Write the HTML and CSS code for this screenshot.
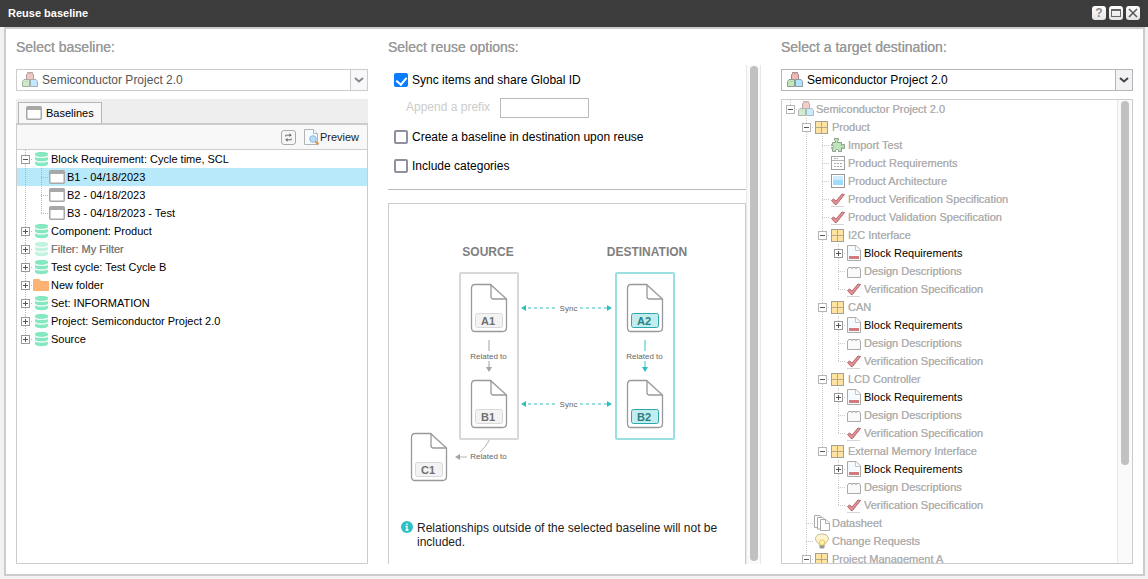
FILE: index.html
```html
<!DOCTYPE html>
<html lang="en">
<head>
<meta charset="utf-8">
<meta name="viewport" content="width=device-width, initial-scale=1">
<title>Reuse baseline</title>
<link rel="stylesheet" href="styles.css">
</head>
<body>
<svg class="sprite" width="0" height="0" aria-hidden="true">
  <symbol id="i-project" viewBox="0 0 16 16">
    <path d="M4.500 8V3L5.500 1.500V.5H7.500V1.500H8.500V.5H10.500V1.500L11.500 3V8z" fill="#f0b9b5" stroke="#a08482"/>
    <path d="M.5 14.500V9.500L2 7.500H7.500V14.500z" fill="#c3e6bf" stroke="#8b9c89"/>
    <path d="M3 9.500H5.500" stroke="#a5cfa0"/>
    <path d="M8.500 14.500V7.500H14L15.500 9.500V14.500z" fill="#b2e3fd" stroke="#8b9ca6"/>
  </symbol>
  <symbol id="i-window" viewBox="0 0 16 16">
    <rect x=".75" y="1.750" width="14.500" height="12.500" rx="1" fill="#fff" stroke="#a8a8a8" stroke-width="1.500"/>
    <path d="M1 2h14v3H1z" fill="#a8a8a8"/>
  </symbol>
  <symbol id="i-db" viewBox="0 0 16 16">
    <g fill="#86e8c1">
      <path d="M2 3C2 1.500 5 1 8.500 1S15 1.500 15 3V4C14.500 5.500 12 6 8.500 6S2.500 5.500 2 4z"/>
      <path d="M2 6C3.500 7.200 13.500 7.200 15 6V8.500C14.500 10 12 10.600 8.500 10.600S2.500 10 2 8.500z"/>
      <path d="M2 10.500C3.500 11.800 13.500 11.800 15 10.500V13C14.500 14.600 12 15.200 8.500 15.200S2.500 14.600 2 13z"/>
    </g>
    <path d="M2 4.800C3.500 6.800 13.500 6.800 15 4.800M2 9.300C3.500 11.400 13.500 11.400 15 9.300" fill="none" stroke="#e4faf2"/>
  </symbol>
  <symbol id="i-folder" viewBox="0 0 16 16">
    <path d="M0 3Q0 2 1 2H6L8 4H15Q16 4 16 5V13Q16 14 15 14H1Q0 14 0 13z" fill="#fbb273"/>
  </symbol>
  <symbol id="i-grid" viewBox="0 0 16 16">
    <rect x="1.500" y="2.500" width="12" height="12" fill="#ffe3a1" stroke="#a5a097"/>
    <path d="M7.500 3V14M2 8.500H13" stroke="#b8a88a"/>
  </symbol>
  <symbol id="i-puzzle" viewBox="0 0 16 16">
    <path d="M2.500 5.500H5.500V4L4.500 3V1.500H8.500V3L7.500 4V5.500H11.500V8.500L13 7.500H14.500V11.500H13L11.500 10.500V14.500H8.500V13L7.500 12.500H6.500L5.500 13V14.500H2.500V11.500H1.500V10.500H3L3.500 9.500 3 8.500H1.500V7.500H2.500z" fill="#bfe3bd" stroke="#8ba08a"/>
  </symbol>
  <symbol id="i-list" viewBox="0 0 16 16">
    <rect x="1.500" y="1.500" width="13" height="13" fill="#fff" stroke="#a0a0a0"/>
    <path d="M2 5.500H14" stroke="#b5b5b5"/>
    <path d="M4 3.500H8M4 8.500H12M4 11.500H12" stroke="#aaa" stroke-dasharray="2 1"/>
  </symbol>
  <symbol id="i-picture" viewBox="0 0 16 16">
    <rect x="1.500" y="1.500" width="13" height="13" fill="#fff" stroke="#999"/>
    <path d="M3 3H13V8H3z" fill="#cdeeff"/><path d="M3 7H13V12H3z" fill="#9edcff"/>
  </symbol>
  <symbol id="i-check" viewBox="0 0 16 16">
    <path d="M1.500 9.500L3.500 8 6 10 12 3 14.500 3.500 6.500 13.500H5z" fill="#df8f93" stroke="#b56a70"/>
    <path d="M1 15.500H14" stroke="#bbb" opacity=".6"/>
  </symbol>
  <symbol id="i-doc" viewBox="0 0 16 16">
    <path d="M1.500 .5H10L14.500 5V15.500H1.500z" fill="#f5fbfe" stroke="#aaa"/>
    <path d="M9.500 1V5.500H14" fill="#fff" stroke="#bfc8c4"/>
    <path d="M3 11H13V14H3z" fill="#d27a7c"/>
  </symbol>
  <symbol id="i-brick" viewBox="0 0 16 16">
    <path d="M1.500 14.500V6L2.500 5V4.500H5.500V5.500H6.500V4.500H9.500V5.500H10.500V4.500H13.500V5L14.500 6V14.500z" fill="#fafafa" stroke="#aaa"/>
  </symbol>
  <symbol id="i-pages" viewBox="0 0 16 16">
    <g fill="#fff" stroke="#aaa">
      <path d="M.5 12.500V.5H6L9 3.500V12.500z"/>
      <path d="M3.500 14V2.500H9L12 5.500V14z"/>
      <path d="M6.500 15.500V4.500H12L15.500 8V15.500z"/>
      <path d="M11.500 5V8.500H15"/>
    </g>
  </symbol>
  <symbol id="i-bulb" viewBox="0 0 16 16">
    <path d="M5.500 12.500Q5.500 11 3 9Q1 7 1.500 4.500Q3 .8 8 .8T14.500 4.500Q15 7 12.500 9Q10.500 11 10.500 12.500z" fill="#fdf2cf" stroke="#c9bd98"/>
    <rect x="5.500" y="7" width="5" height="5" rx="2" fill="#fff1a8" stroke="#ecc95a"/>
    <path d="M5.500 12.500H10.500V14.500L9.500 15.500H6.500L5.500 14.500z" fill="#999"/>
  </symbol>
  <symbol id="i-preview" viewBox="0 0 16 16">
    <path d="M.5 .5H9.500L13.500 4.500V15.500H.5z" fill="#f5fafe" stroke="#b4b4b4"/>
    <path d="M9.500 .5V4.500H13.500" fill="#fff" stroke="#b4b4b4"/>
    <circle cx="9" cy="10" r="3.300" fill="#b9dcf9" stroke="#8fbbe2"/>
    <path d="M11.500 12.500L14.500 15.500" stroke="#dd8c45" stroke-width="2"/>
  </symbol>
  <symbol id="i-page" viewBox="0 0 38 50">
    <path d="M5 1.500H20.500L36.500 16V44.500Q36.500 48.500 32.500 48.500H5Q1.500 48.500 1.500 44.500V5.500Q1.500 1.500 5 1.500z" fill="#fff" stroke="#999" stroke-width="1.300"/>
    <path d="M21 1.500V13.500Q21 16 23.500 16H36.500" fill="none" stroke="#999" stroke-width="1.300"/>
  </symbol>
</svg>

<header class="titlebar">
  <h1 class="titlebar__title">Reuse baseline</h1>
  <div class="titlebar__tools">
    <button class="tool" type="button" aria-label="Help">?</button>
    <button class="tool" type="button" aria-label="Maximize"><svg viewBox="0 0 14 14"><rect x="2.500" y="3.500" width="9" height="7" fill="none" stroke="#666"/><path d="M2 4H12" stroke="#666" stroke-width="2"/></svg></button>
    <button class="tool" type="button" aria-label="Close"><svg viewBox="0 0 14 14"><path d="M3 3L11 11M11 3L3 11" stroke="#555" stroke-width="1.500"/></svg></button>
  </div>
</header>

<main class="panel">
  <section class="column">
    <h2 class="heading"><label for="baseline">Select baseline:</label></h2>
    <div class="combo combo--muted">
      <svg class="icon"><use href="#i-project"/></svg>
      <select class="combo__select" id="baseline"><option>Semiconductor Project 2.0</option></select>
      <span class="combo__arrow"><svg viewBox="0 0 10 6"><path d="M1 1L5 4.500 9 1" fill="none" stroke="currentColor" stroke-width="2"/></svg></span>
    </div>
    <div class="tabs">
      <button class="tab" type="button"><svg class="icon"><use href="#i-window"/></svg>Baselines</button>
    </div>
    <div class="toolbar">
      <button class="tool tool--refresh" type="button" aria-label="Refresh"><svg viewBox="0 0 14 14"><path d="M4 6V4.500H9M10 8V9.500H5" fill="none" stroke="#666"/><path d="M8 2.500L10.500 4.500 8 6.500zM6 7.500L3.500 9.500 6 11.500z" fill="#666"/></svg></button>
      <button class="preview" type="button"><svg class="icon"><use href="#i-preview"/></svg>Preview</button>
    </div>
    <div class="box">
      <ul class="tree">
        <li><div class="row"><span class="slot"><button class="toggle toggle--open" type="button" aria-label="Collapse"></button></span><svg class="icon"><use href="#i-db"/></svg><span>Block Requirement: Cycle time, SCL</span></div>
          <ul>
            <li><div class="row row--selected"><span class="slot"></span><svg class="icon"><use href="#i-window"/></svg><span>B1 - 04/18/2023</span></div></li>
            <li><div class="row"><span class="slot"></span><svg class="icon"><use href="#i-window"/></svg><span>B2 - 04/18/2023</span></div></li>
            <li><div class="row"><span class="slot"></span><svg class="icon"><use href="#i-window"/></svg><span>B3 - 04/18/2023 - Test</span></div></li>
          </ul>
        </li>
        <li><div class="row"><span class="slot"><button class="toggle" type="button" aria-label="Expand"></button></span><svg class="icon"><use href="#i-db"/></svg><span>Component: Product</span></div></li>
        <li><div class="row row--faded"><span class="slot"><button class="toggle" type="button" aria-label="Expand"></button></span><svg class="icon"><use href="#i-db"/></svg><span>Filter: My Filter</span></div></li>
        <li><div class="row"><span class="slot"><button class="toggle" type="button" aria-label="Expand"></button></span><svg class="icon"><use href="#i-db"/></svg><span>Test cycle: Test Cycle B</span></div></li>
        <li><div class="row"><span class="slot"><button class="toggle" type="button" aria-label="Expand"></button></span><svg class="icon"><use href="#i-folder"/></svg><span>New folder</span></div></li>
        <li><div class="row"><span class="slot"><button class="toggle" type="button" aria-label="Expand"></button></span><svg class="icon"><use href="#i-db"/></svg><span>Set: INFORMATION</span></div></li>
        <li><div class="row"><span class="slot"><button class="toggle" type="button" aria-label="Expand"></button></span><svg class="icon"><use href="#i-db"/></svg><span>Project: Semiconductor Project 2.0</span></div></li>
        <li><div class="row"><span class="slot"><button class="toggle" type="button" aria-label="Expand"></button></span><svg class="icon"><use href="#i-db"/></svg><span>Source</span></div></li>
      </ul>
    </div>
  </section>

  <section class="column">
    <h2 class="heading">Select reuse options:</h2>
    <div class="scroller">
      <div class="scroller__content">
        <form class="options">
          <label class="option"><input class="checkbox" type="checkbox" checked>Sync items and share Global ID</label>
          <div class="prefix"><label for="prefix">Append a prefix</label><input class="prefix__input" id="prefix" type="text" disabled></div>
          <label class="option"><input class="checkbox" type="checkbox">Create a baseline in destination upon reuse</label>
          <label class="option option--last"><input class="checkbox" type="checkbox">Include categories</label>
        </form>
        <div class="diagram">
          <svg class="diagram__art" width="300" height="250" viewBox="400 240 300 250" role="img" aria-label="Source items synced with destination items">
            <g class="caption"><text x="488" y="256">SOURCE</text><text x="647" y="256">DESTINATION</text></g>
            <rect x="460" y="273" width="58" height="166" rx="1" fill="none" stroke="#d8d8d8" stroke-width="2"/>
            <rect x="616" y="273" width="58" height="166" rx="1" fill="none" stroke="#98e1e0" stroke-width="2"/>
            <use href="#i-page" x="470" y="283" width="38" height="50"/>
            <use href="#i-page" x="470" y="379" width="38" height="50"/>
            <use href="#i-page" x="626" y="283" width="38" height="50"/>
            <use href="#i-page" x="626" y="379" width="38" height="50"/>
            <use href="#i-page" x="410" y="432" width="38" height="50"/>
            <g fill="#f3f3f3" stroke="#d8d8d8">
              <rect x="475.500" y="313.500" width="27" height="14" rx="2"/>
              <rect x="475.500" y="409.500" width="27" height="14" rx="2"/>
              <rect x="415.500" y="462.500" width="27" height="14" rx="2"/>
            </g>
            <g fill="#c2ecee" stroke="#2ca9ac">
              <rect x="631.500" y="313.500" width="27" height="14" rx="2"/>
              <rect x="631.500" y="409.500" width="27" height="14" rx="2"/>
            </g>
            <g class="badge"><text x="488" y="325">A1</text><text x="488" y="421">B1</text><text x="428" y="474">C1</text></g>
            <g class="badge badge--teal"><text x="644" y="325">A2</text><text x="644" y="421">B2</text></g>
            <g stroke="#98e1e0" stroke-width="2" stroke-dasharray="3 3">
              <path d="M528 308H558M580 308H607"/>
              <path d="M528 404H558M580 404H607"/>
            </g>
            <path d="M521 308L526 305V311zM612 308L607 305V311zM521 404L526 401V407zM612 404L607 401V407z" fill="#2fbfc2"/>
            <path d="M489 340V351M489 361V367" stroke="#d0d0d0" stroke-width="2"/>
            <path d="M645 340V351M645 361V367" stroke="#98e1e0" stroke-width="2"/>
            <path d="M486 367H492L489 372z" fill="#a3a3a3"/>
            <path d="M642 367H648L645 372z" fill="#2fbfc2"/>
            <path d="M489.500 440Q485 448 480 452M459 457H467" fill="none" stroke="#b5b5b5"/>
            <path d="M455 457L460 454V460z" fill="#a3a3a3"/>
            <g class="note"><text x="568.500" y="311">Sync</text><text x="568.500" y="407">Sync</text><text x="488.500" y="359">Related to</text><text x="644.500" y="359">Related to</text><text x="488.500" y="459">Related to</text></g>
          </svg>
          <p class="info"><svg class="info__icon" viewBox="0 0 12 12"><circle cx="6" cy="6" r="6" fill="#2fc0c4"/><path d="M6 2.500V4M4.500 5.500H6V8.500M4.500 9H7.500" fill="none" stroke="#fff" stroke-width="1.300"/></svg><span>Relationships outside of the selected baseline will not be included.</span></p>
        </div>
      </div>
      <div class="track track--outer" aria-hidden="true"><div class="thumb"></div></div>
    </div>
  </section>

  <section class="column">
    <h2 class="heading"><label for="target">Select a target destination:</label></h2>
    <div class="combo">
      <svg class="icon"><use href="#i-project"/></svg>
      <select class="combo__select" id="target"><option>Semiconductor Project 2.0</option></select>
      <span class="combo__arrow"><svg viewBox="0 0 10 6"><path d="M1 1L5 4.500 9 1" fill="none" stroke="currentColor" stroke-width="2"/></svg></span>
    </div>
    <div class="box box--target">
      <ul class="tree tree--muted">
        <li><div class="row"><span class="slot"><button class="toggle toggle--open" type="button" aria-label="Collapse"></button></span><svg class="icon icon--pale"><use href="#i-project"/></svg><span>Semiconductor Project 2.0</span></div>
          <ul>
            <li><div class="row"><span class="slot"><button class="toggle toggle--open" type="button" aria-label="Collapse"></button></span><svg class="icon"><use href="#i-grid"/></svg><span>Product</span></div>
              <ul>
                <li><div class="row"><span class="slot"></span><svg class="icon"><use href="#i-puzzle"/></svg><span>Import Test</span></div></li>
                <li><div class="row"><span class="slot"></span><svg class="icon"><use href="#i-list"/></svg><span>Product Requirements</span></div></li>
                <li><div class="row"><span class="slot"></span><svg class="icon"><use href="#i-picture"/></svg><span>Product Architecture</span></div></li>
                <li><div class="row"><span class="slot"></span><svg class="icon"><use href="#i-check"/></svg><span>Product Verification Specification</span></div></li>
                <li><div class="row"><span class="slot"></span><svg class="icon"><use href="#i-check"/></svg><span>Product Validation Specification</span></div></li>
                <li><div class="row"><span class="slot"><button class="toggle toggle--open" type="button" aria-label="Collapse"></button></span><svg class="icon"><use href="#i-grid"/></svg><span>I2C Interface</span></div>
                  <ul>
                    <li><div class="row row--active"><span class="slot"><button class="toggle" type="button" aria-label="Expand"></button></span><svg class="icon"><use href="#i-doc"/></svg><span>Block Requirements</span></div></li>
                    <li><div class="row"><span class="slot"></span><svg class="icon"><use href="#i-brick"/></svg><span>Design Descriptions</span></div></li>
                    <li><div class="row"><span class="slot"></span><svg class="icon"><use href="#i-check"/></svg><span>Verification Specification</span></div></li>
                  </ul>
                </li>
                <li><div class="row"><span class="slot"><button class="toggle toggle--open" type="button" aria-label="Collapse"></button></span><svg class="icon"><use href="#i-grid"/></svg><span>CAN</span></div>
                  <ul>
                    <li><div class="row row--active"><span class="slot"><button class="toggle" type="button" aria-label="Expand"></button></span><svg class="icon"><use href="#i-doc"/></svg><span>Block Requirements</span></div></li>
                    <li><div class="row"><span class="slot"></span><svg class="icon"><use href="#i-brick"/></svg><span>Design Descriptions</span></div></li>
                    <li><div class="row"><span class="slot"></span><svg class="icon"><use href="#i-check"/></svg><span>Verification Specification</span></div></li>
                  </ul>
                </li>
                <li><div class="row"><span class="slot"><button class="toggle toggle--open" type="button" aria-label="Collapse"></button></span><svg class="icon"><use href="#i-grid"/></svg><span>LCD Controller</span></div>
                  <ul>
                    <li><div class="row row--active"><span class="slot"><button class="toggle" type="button" aria-label="Expand"></button></span><svg class="icon"><use href="#i-doc"/></svg><span>Block Requirements</span></div></li>
                    <li><div class="row"><span class="slot"></span><svg class="icon"><use href="#i-brick"/></svg><span>Design Descriptions</span></div></li>
                    <li><div class="row"><span class="slot"></span><svg class="icon"><use href="#i-check"/></svg><span>Verification Specification</span></div></li>
                  </ul>
                </li>
                <li><div class="row"><span class="slot"><button class="toggle toggle--open" type="button" aria-label="Collapse"></button></span><svg class="icon"><use href="#i-grid"/></svg><span>External Memory Interface</span></div>
                  <ul>
                    <li><div class="row row--active"><span class="slot"><button class="toggle" type="button" aria-label="Expand"></button></span><svg class="icon"><use href="#i-doc"/></svg><span>Block Requirements</span></div></li>
                    <li><div class="row"><span class="slot"></span><svg class="icon"><use href="#i-brick"/></svg><span>Design Descriptions</span></div></li>
                    <li><div class="row"><span class="slot"></span><svg class="icon"><use href="#i-check"/></svg><span>Verification Specification</span></div></li>
                  </ul>
                </li>
              </ul>
            </li>
            <li><div class="row"><span class="slot"></span><svg class="icon"><use href="#i-pages"/></svg><span>Datasheet</span></div></li>
            <li><div class="row"><span class="slot"></span><svg class="icon"><use href="#i-bulb"/></svg><span>Change Requests</span></div></li>
            <li><div class="row"><span class="slot"><button class="toggle toggle--open" type="button" aria-label="Collapse"></button></span><svg class="icon"><use href="#i-grid"/></svg><span>Project Management A</span></div></li>
          </ul>
        </li>
      </ul>
      <div class="track" aria-hidden="true"><div class="thumb thumb--partial"></div></div>
    </div>
  </section>
</main>
</body>
</html>
```
FILE: styles.css
```css
* {
  box-sizing: border-box;
}

body {
  margin: 0;
  height: 100vh;
  display: flex;
  flex-direction: column;
  background: #f2f2f2;
  color: #000;
  font-family: "Liberation Sans", Arial, sans-serif;
  font-size: 11px;
}

button,
input,
select {
  font: inherit;
  color: inherit;
  margin: 0;
  padding: 0;
}

svg {
  display: block;
  flex: none;
}

.sprite {
  position: absolute;
}

.icon {
  width: 16px;
  height: 16px;
}

.icon--pale {
  opacity: 0.7;
}

/* Title bar */
.titlebar {
  display: flex;
  align-items: center;
  justify-content: space-between;
  height: 27px;
  flex: none;
  padding: 0 8px 2px;
  background: #3c3c3c;
  color: #fff;
}

.titlebar__title {
  margin: 0;
  font-size: 11px;
  font-weight: bold;
}

.titlebar__tools {
  display: flex;
  gap: 3px;
}

.tool {
  width: 14px;
  height: 14px;
  border: 0;
  border-radius: 3px;
  background: linear-gradient(#fff, #e4e4e4);
  color: #888;
  font-size: 12px;
  font-weight: bold;
  line-height: 14px;
  text-align: center;
}

.tool--refresh {
  width: 15px;
  height: 15px;
  border: 1px solid #aaa;
  background: #f6f6f6;
}

/* Main panel */
.panel {
  flex: 1;
  min-height: 0;
  display: grid;
  grid-template-columns: 352fr 373fr 352fr;
  gap: 20px;
  margin: 0 3px 3px 4px;
  padding: 9px 10px 10px;
  border: 2px solid #ccc;
  background: #fff;
}

.column {
  min-width: 0;
  min-height: 0;
  display: flex;
  flex-direction: column;
}

.heading {
  margin: 0;
  font-size: 14px;
  line-height: 18px;
  font-weight: normal;
  color: #999;
  text-shadow: 0 0 0 currentColor;
}

/* Combo boxes */
.combo {
  display: flex;
  align-items: center;
  gap: 4px;
  flex: none;
  height: 22px;
  margin: 13px 0 8px;
  padding-left: 5px;
  border: 1px solid #b5b5b5;
  font-size: 12px;
}

.combo--muted {
  border-color: #ccc;
  color: #555;
}

.combo--muted .icon {
  opacity: 0.8;
}

.combo__select {
  flex: 1;
  min-width: 0;
  height: 20px;
  appearance: none;
  border: 0;
  background: transparent;
}

.combo__arrow {
  display: flex;
  align-items: center;
  justify-content: center;
  width: 17px;
  height: 20px;
  border-left: 1px solid #b5b5b5;
  background: #f2f2f4;
  color: #444;
  pointer-events: none;
}

.combo--muted .combo__arrow {
  border-color: #ccc;
  background: #f8f8fa;
  color: #888;
}

.combo__arrow svg {
  width: 10px;
  height: 6px;
}

/* Tabs and toolbar */
.tabs {
  display: flex;
  flex: none;
  height: 26px;
  padding: 3px 2px 0;
  border-bottom: 2px solid #ccc;
  background: #eee;
}

.tab {
  display: flex;
  align-items: center;
  gap: 4px;
  padding: 0 7px;
  border: 1px solid #b5b5b5;
  border-bottom: 0;
  background: #f8f8f8;
}

.toolbar {
  display: flex;
  align-items: center;
  justify-content: flex-end;
  gap: 8px;
  flex: none;
  height: 24px;
  padding-right: 8px;
  border: 1px solid #ccc;
  border-width: 0 1px;
  background: #f8f8f8;
}

.preview {
  display: flex;
  align-items: center;
  border: 0;
  background: none;
  color: #222;
}

.box {
  flex: 1;
  min-height: 0;
  display: flex;
  overflow: hidden;
  border: 1px solid #ccc;
}

/* Trees */
.tree {
  --rail: #bbb;
  flex: 1;
  min-width: 0;
}

.tree--muted {
  --rail: #ccc;
  color: #b0b0b0;
  text-shadow: 0 0 0 currentColor;
}

.tree,
.tree ul {
  margin: 0;
  padding: 0;
  list-style: none;
}

.tree ul {
  padding-left: 16px;
}

.tree li:not(:last-child) {
  background: repeating-linear-gradient(var(--rail) 0 1px, transparent 1px 2px) 8px 0 / 1px 100% no-repeat;
}

.row {
  display: flex;
  align-items: center;
  height: 18px;
  white-space: nowrap;
}

.row .icon {
  margin-right: 2px;
}

.row--selected {
  margin-left: -16px;
  padding-left: 16px;
  background: rgba(49, 192, 241, 0.35);
}

.row--faded span {
  color: #808080;
  text-shadow: 0 0 0 currentColor;
}

.row--faded .icon {
  opacity: 0.5;
}

.row--active {
  color: #000;
  text-shadow: none;
}

.slot {
  display: flex;
  align-items: center;
  width: 16px;
  height: 18px;
  padding-left: 4px;
  background: repeating-linear-gradient(90deg, var(--rail) 0 1px, transparent 1px 2px) 8px 9px / 8px 1px no-repeat;
}

li:last-child > .row > .slot {
  background:
    repeating-linear-gradient(90deg, var(--rail) 0 1px, transparent 1px 2px) 8px 9px / 8px 1px no-repeat,
    repeating-linear-gradient(var(--rail) 0 1px, transparent 1px 2px) 8px 0 / 1px 9px no-repeat;
}

.toggle {
  width: 9px;
  height: 9px;
  border: 1px solid #999;
  background:
    linear-gradient(#555, #555) center / 5px 1px no-repeat,
    linear-gradient(#555, #555) center / 1px 5px no-repeat,
    #fff;
}

.toggle--open {
  background:
    linear-gradient(#555, #555) center / 5px 1px no-repeat,
    #fff;
}

.tree--muted .toggle--open {
  border-color: #b5b5b5;
}

/* Reuse options */
.scroller {
  flex: 1;
  min-height: 0;
  display: flex;
  margin-top: 9px;
}

.scroller__content {
  flex: 1;
  min-width: 0;
  display: flex;
  flex-direction: column;
}

.options {
  padding: 8px 6px 0;
  border-bottom: 1px solid #bbb;
  font-size: 12px;
}

.option {
  display: flex;
  align-items: center;
  gap: 4px;
  height: 14px;
  margin-bottom: 15px;
}

.option--last {
  margin-bottom: 16px;
}

.checkbox {
  appearance: none;
  display: flex;
  align-items: flex-start;
  justify-content: center;
  width: 14px;
  height: 14px;
  border: 2px solid #8f8f9d;
  border-radius: 2px;
  background: #fff;
}

.checkbox:checked {
  border-color: #0a7cff;
  background: #0a7cff;
}

.checkbox:checked::before {
  content: "";
  flex: none;
  width: 5px;
  height: 8px;
  border: solid #fff;
  border-width: 0 2px 2px 0;
  transform: rotate(40deg);
}

.prefix {
  display: flex;
  gap: 10px;
  margin: -4px 0 12px;
  padding-left: 12px;
  line-height: 18px;
  color: #ccc;
}

.prefix__input {
  width: 89px;
  height: 20px;
  border: 1px solid #bbb;
  background: #fff;
}

.diagram {
  flex: 1;
  min-height: 0;
  margin-top: 13px;
  padding: 36px 12px 0 11px;
  border: 1px solid #ccc;
  border-bottom: 0;
}

.diagram__art {
  max-width: 100%;
}

.caption {
  font-size: 12px;
  font-weight: bold;
  fill: #808080;
  text-anchor: middle;
}

.badge {
  font-size: 11px;
  font-weight: bold;
  fill: #707070;
  text-anchor: middle;
}

.badge--teal {
  fill: #2a8084;
}

.note {
  font-size: 8px;
  fill: #666;
  text-anchor: middle;
}

.info {
  display: flex;
  gap: 4px;
  margin: 31px 0 0 1px;
  font-size: 12px;
  line-height: 14px;
  color: #222;
}

.info__icon {
  width: 12px;
  height: 12px;
}

/* Scroll bars */
.track {
  flex: none;
  width: 15px;
  padding: 1px 3px;
  border: 1px solid #e8e8e8;
  border-width: 0 0 0 1px;
  background: #fafafa;
}

.track--outer {
  border-right-width: 1px;
  padding: 1px 3px 3px;
}

.thumb {
  height: 100%;
  width: 8px;
  border-radius: 4px;
  background: #c1c1c1;
}

.thumb--partial {
  height: 79%;
}
```
